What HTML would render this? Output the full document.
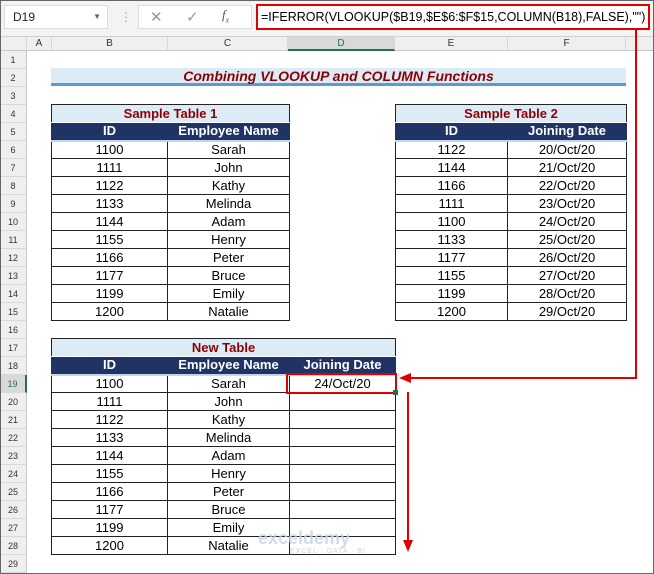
<!DOCTYPE html>
<html><head><meta charset="utf-8"><style>
*{margin:0;padding:0;box-sizing:border-box}
body{width:654px;height:574px;background:#fff;position:relative;overflow:hidden;font-family:"Liberation Sans",sans-serif}
.abs{position:absolute}
.fb{left:0;top:0;width:654px;height:37px;background:#f3f3f3;border-bottom:1px solid #d0d0d0}
.colh{top:37px;height:14px;background:#efefef;border-bottom:1px solid #c8c8c8;font-size:10px;color:#333;text-align:center;line-height:13px;border-right:1px solid #d8d8d8}
.rowh{left:0;width:27px;height:18px;background:#efefef;border-bottom:1px solid #d8d8d8;border-right:1px solid #c8c8c8;font-size:9px;color:#333;text-align:center;line-height:18px}
table{border-collapse:collapse;position:absolute;font-size:13px;table-layout:fixed}
td{height:18px;border:1px solid #222;text-align:center;padding:0;line-height:16px;color:#000;white-space:nowrap}
td.t{background:#ddebf7;color:#8b0000;font-weight:bold;border-bottom:1px solid #fff}
td.h{background:#1f3465;color:#fff;font-weight:bold;border-color:#1f3465;border-bottom:2px solid #bdd7ee}
</style></head><body>
<div class="abs fb"></div>
<div class="abs" style="left:4px;top:5px;width:104px;height:24px;background:#fff;border:1px solid #ddd;font-size:12px;line-height:22px;padding-left:8px;color:#222">D19<span style="position:absolute;right:6px;top:0;font-size:8px;color:#666">▼</span></div>
<div class="abs" style="left:120px;top:10px;font-size:12px;color:#aaa">⋮</div>
<div class="abs" style="left:138px;top:5px;width:114px;height:24px;background:#fff;border:1px solid #ddd"></div>
<div class="abs" style="left:150px;top:8px;font-size:15px;color:#999">✕</div>
<div class="abs" style="left:186px;top:8px;font-size:15px;color:#999">✓</div>
<div class="abs" style="left:222px;top:7px;font-size:13px;color:#555;font-style:italic;font-family:'Liberation Serif',serif">f<sub style="font-size:8px">x</sub></div>
<div class="abs" style="left:256px;top:4px;width:394px;height:26px;background:#fff;border:2px solid #e00000;font-size:12.5px;line-height:22px;padding-left:3px;color:#000;white-space:nowrap;overflow:hidden">=IFERROR(VLOOKUP($B19,$E$6:$F$15,COLUMN(B18),FALSE),"")</div>

<div class="abs colh" style="left:0;width:27px"></div>
<div class="abs colh" style="left:27px;width:25px">A</div>
<div class="abs colh" style="left:52px;width:116px">B</div>
<div class="abs colh" style="left:168px;width:120px">C</div>
<div class="abs colh" style="left:288px;width:107px;background:#d9d9d9;border-bottom:2px solid #217346;color:#217346">D</div>
<div class="abs colh" style="left:395px;width:113px">E</div>
<div class="abs colh" style="left:508px;width:118px">F</div>
<div class="abs colh" style="left:626px;width:28px"></div>

<div class="abs rowh" style="top:51px">1</div><div class="abs rowh" style="top:69px">2</div><div class="abs rowh" style="top:87px">3</div><div class="abs rowh" style="top:105px">4</div><div class="abs rowh" style="top:123px">5</div><div class="abs rowh" style="top:141px">6</div><div class="abs rowh" style="top:159px">7</div><div class="abs rowh" style="top:177px">8</div><div class="abs rowh" style="top:195px">9</div><div class="abs rowh" style="top:213px">10</div><div class="abs rowh" style="top:231px">11</div><div class="abs rowh" style="top:249px">12</div><div class="abs rowh" style="top:267px">13</div><div class="abs rowh" style="top:285px">14</div><div class="abs rowh" style="top:303px">15</div><div class="abs rowh" style="top:321px">16</div><div class="abs rowh" style="top:339px">17</div><div class="abs rowh" style="top:357px">18</div><div class="abs rowh" style="top:375px;background:#d9d9d9;border-right:2px solid #217346;color:#217346">19</div><div class="abs rowh" style="top:393px">20</div><div class="abs rowh" style="top:411px">21</div><div class="abs rowh" style="top:429px">22</div><div class="abs rowh" style="top:447px">23</div><div class="abs rowh" style="top:465px">24</div><div class="abs rowh" style="top:483px">25</div><div class="abs rowh" style="top:501px">26</div><div class="abs rowh" style="top:519px">27</div><div class="abs rowh" style="top:537px">28</div><div class="abs rowh" style="top:555px">29</div>

<div class="abs" style="left:51px;top:68px;width:575px;height:18px;background:#ddebf7;border-bottom:3px solid #5b9bd5;text-align:center;font-size:14px;font-weight:bold;font-style:italic;color:#8b0000;line-height:17px">Combining VLOOKUP and COLUMN Functions</div>

<table style="left:51px;top:104px;width:238px"><colgroup><col style="width:116px"><col style="width:122px"></colgroup>
<tr><td class="t" colspan="2">Sample Table 1</td></tr>
<tr><td class="h">ID</td><td class="h">Employee Name</td></tr>
<tr><td>1100</td><td>Sarah</td></tr><tr><td>1111</td><td>John</td></tr><tr><td>1122</td><td>Kathy</td></tr><tr><td>1133</td><td>Melinda</td></tr><tr><td>1144</td><td>Adam</td></tr><tr><td>1155</td><td>Henry</td></tr><tr><td>1166</td><td>Peter</td></tr><tr><td>1177</td><td>Bruce</td></tr><tr><td>1199</td><td>Emily</td></tr><tr><td>1200</td><td>Natalie</td></tr>
</table>

<table style="left:395px;top:104px;width:231px"><colgroup><col style="width:112px"><col style="width:119px"></colgroup>
<tr><td class="t" colspan="2">Sample Table 2</td></tr>
<tr><td class="h">ID</td><td class="h">Joining Date</td></tr>
<tr><td>1122</td><td>20/Oct/20</td></tr><tr><td>1144</td><td>21/Oct/20</td></tr><tr><td>1166</td><td>22/Oct/20</td></tr><tr><td>1111</td><td>23/Oct/20</td></tr><tr><td>1100</td><td>24/Oct/20</td></tr><tr><td>1133</td><td>25/Oct/20</td></tr><tr><td>1177</td><td>26/Oct/20</td></tr><tr><td>1155</td><td>27/Oct/20</td></tr><tr><td>1199</td><td>28/Oct/20</td></tr><tr><td>1200</td><td>29/Oct/20</td></tr>
</table>

<table style="left:51px;top:338px;width:344px"><colgroup><col style="width:116px"><col style="width:122px"><col style="width:106px"></colgroup>
<tr><td class="t" colspan="3">New Table</td></tr>
<tr><td class="h">ID</td><td class="h">Employee Name</td><td class="h">Joining Date</td></tr>
<tr><td>1100</td><td>Sarah</td><td>24/Oct/20</td></tr><tr><td>1111</td><td>John</td><td></td></tr><tr><td>1122</td><td>Kathy</td><td></td></tr><tr><td>1133</td><td>Melinda</td><td></td></tr><tr><td>1144</td><td>Adam</td><td></td></tr><tr><td>1155</td><td>Henry</td><td></td></tr><tr><td>1166</td><td>Peter</td><td></td></tr><tr><td>1177</td><td>Bruce</td><td></td></tr><tr><td>1199</td><td>Emily</td><td></td></tr><tr><td>1200</td><td>Natalie</td><td></td></tr>
</table>

<div class="abs" style="left:286px;top:373px;width:111px;height:21px;border:2px solid #e00000"></div>
<div class="abs" style="left:393px;top:390px;width:5px;height:5px;background:#217346"></div>

<svg class="abs" style="left:0;top:0" width="654" height="574">
<polyline points="636,30 636,378 410,378" fill="none" stroke="#e00000" stroke-width="2"/>
<polygon points="399,378 411,373 411,383" fill="#e00000"/>
<line x1="408" y1="392" x2="408" y2="542" stroke="#e00000" stroke-width="2"/>
<polygon points="408,552 403,540 413,540" fill="#e00000"/>
</svg>
<div class="abs" style="left:258px;top:528px;font-size:18px;color:#c8d4e4;font-weight:bold;opacity:.8">exceldemy</div>
<div class="abs" style="left:290px;top:548px;font-size:7px;color:#c8d4e4;letter-spacing:1px">EXCEL · DATA · BI</div>
<div class="abs" style="left:0;top:0;width:654px;height:574px;border:1px solid #666"></div>
</body></html>
